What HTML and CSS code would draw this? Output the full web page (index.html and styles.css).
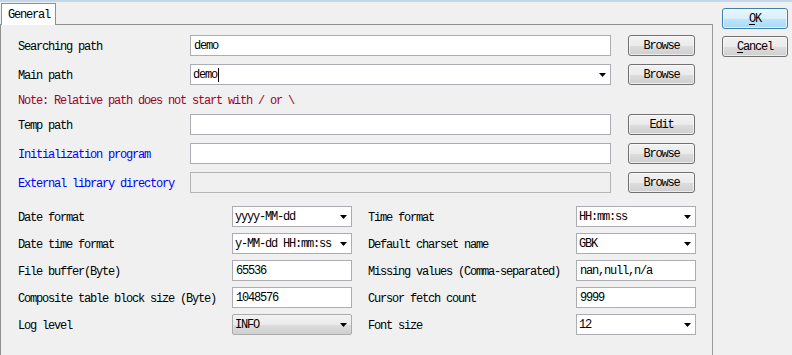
FILE: index.html
```html
<!DOCTYPE html>
<html lang="en">
<head>
  <meta charset="UTF-8">
  <title>Options</title>
  <link rel="stylesheet" href="styles.css">
</head>
<body>
  <div class="window">
    <div class="tabs">
      <div class="tab-strip">
        <div class="tab">General</div>
      </div>
      <div class="panel">
        <!-- path settings -->
        <div class="paths">
          <span class="label">Searching path</span>
          <div class="field"><span class="value">demo</span></div>
          <button class="btn">Browse</button>

          <span class="label">Main path</span>
          <div class="field combo"><span class="value">demo<i class="caret"></i></span><svg class="arrow" width="7" height="4"><path d="M0 0H7L3.5 4Z"/></svg></div>
          <button class="btn">Browse</button>

          <span class="note">Note: Relative path does not start with / or \</span>

          <span class="label">Temp path</span>
          <div class="field"></div>
          <button class="btn">Edit</button>

          <span class="label blue">Initialization program</span>
          <div class="field"></div>
          <button class="btn">Browse</button>

          <span class="label blue">External library directory</span>
          <div class="field disabled"></div>
          <button class="btn">Browse</button>
        </div>

        <!-- general options -->
        <div class="options">
          <span class="label">Date format</span>
          <div class="field combo"><span class="value">yyyy-MM-dd</span><svg class="arrow" width="7" height="4"><path d="M0 0H7L3.5 4Z"/></svg></div>
          <span class="label">Time format</span>
          <div class="field combo"><span class="value">HH:mm:ss</span><svg class="arrow" width="7" height="4"><path d="M0 0H7L3.5 4Z"/></svg></div>

          <span class="label">Date time format</span>
          <div class="field combo"><span class="value">y-MM-dd HH:mm:ss</span><svg class="arrow" width="7" height="4"><path d="M0 0H7L3.5 4Z"/></svg></div>
          <span class="label">Default charset name</span>
          <div class="field combo"><span class="value">GBK</span><svg class="arrow" width="7" height="4"><path d="M0 0H7L3.5 4Z"/></svg></div>

          <span class="label">File buffer(Byte)</span>
          <div class="field"><span class="value">65536</span></div>
          <span class="label">Missing values (Comma-separated)</span>
          <div class="field"><span class="value">nan,null,n/a</span></div>

          <span class="label">Composite table block size (Byte)</span>
          <div class="field"><span class="value">1048576</span></div>
          <span class="label">Cursor fetch count</span>
          <div class="field"><span class="value">9999</span></div>

          <span class="label">Log level</span>
          <div class="field combo readonly"><span class="value">INFO</span><svg class="arrow" width="7" height="4"><path d="M0 0H7L3.5 4Z"/></svg></div>
          <span class="label">Font size</span>
          <div class="field combo"><span class="value">12</span><svg class="arrow" width="7" height="4"><path d="M0 0H7L3.5 4Z"/></svg></div>
        </div>
      </div>
    </div>

    <div class="actions">
      <button class="btn default"><u>O</u>K</button>
      <button class="btn"><u>C</u>ancel</button>
    </div>
  </div>
</body>
</html>
```

FILE: styles.css
```css
/* Dialog look, Windows 7 style */
:root {
  --bg: #f0f0f0;
  --tab-border: #8e8f8f;
  --field-border: #abadb3;
  --btn-border: #707070;
}

html, body {
  margin: 0;
  height: 100%;
  overflow: hidden;
}

body {
  background: var(--bg);
  border-top: 2px solid #c3d7ec;
  box-sizing: border-box;
  font-family: "Liberation Mono", "DejaVu Sans Mono", monospace;
  font-size: 12px;
  letter-spacing: -1.2px;
  color: #000;
}

.window {
  display: flex;
  align-items: flex-start;
}

/* Tabs */
.tabs {
  width: 713px;
}

.tab-strip {
  height: 22px;
  display: flex;
  align-items: flex-end;
}

.tab {
  box-sizing: border-box;
  width: 55px;
  height: 22px;
  margin-left: 1px;
  margin-bottom: -1px;
  padding: 4px 0 0 6px;
  background: #fff;
  border: 1px solid var(--tab-border);
  border-bottom: none;
  position: relative;
  z-index: 1;
}

.panel {
  box-sizing: border-box;
  height: 340px;
  border: 1px solid var(--tab-border);
  border-right-color: #9a9a9a;
  padding: 10px 0 0 17px;
  background: var(--bg);
}

/* Path rows */
.paths {
  display: grid;
  grid-template-columns: 172px 421px 84px;
  grid-template-rows: 21px 21px 13px 21px 21px 21px;
  row-gap: 8px;
  align-items: center;
}

.paths .btn {
  justify-self: end;
  width: 67px;
}

.note {
  grid-column: 1 / -1;
  box-sizing: border-box;
  height: 13px;
  padding-top: 2px;
  line-height: 13px;
  color: #a0001e;
}

/* Option rows */
.options {
  display: grid;
  grid-template-columns: 214px 120px 224px 120px;
  grid-auto-rows: 21px;
  row-gap: 6px;
  margin-top: 13px;
  align-items: center;
}

.options .label:nth-child(4n + 3) {
  padding-left: 16px;
}

.label {
  white-space: nowrap;
  padding-top: 3px;
}

.blue {
  color: #0000ff;
}

/* Fields */
.field {
  box-sizing: border-box;
  height: 21px;
  background: #fff;
  border: 1px solid var(--field-border);
  display: flex;
  align-items: center;
  padding: 1px 3px 0;
  overflow: hidden;
  white-space: nowrap;
}

.field.disabled {
  background: var(--bg);
  border-color: #b5b5b5;
}

.combo {
  justify-content: space-between;
  padding-right: 4px;
  padding-left: 2px;
}

.combo.readonly {
  background: linear-gradient(#f2f2f2, #ebebeb 50%, #dddddd 51%, #cfcfcf);
  border-color: #acacac;
  border-radius: 2px;
}

.value {
  display: flex;
  align-items: center;
}

.caret {
  display: inline-block;
  width: 1px;
  height: 14px;
  background: #000;
  margin-left: 1px;
}

.arrow {
  flex: none;
  margin-bottom: 1px;
}

/* Buttons */
.btn {
  box-sizing: border-box;
  height: 21px;
  padding: 1px 0 0;
  font: inherit;
  letter-spacing: inherit;
  color: #000;
  border: 1px solid var(--btn-border);
  border-radius: 3px;
  background: linear-gradient(#f2f2f2, #ebebeb 50%, #dddddd 51%, #cfcfcf);
  box-shadow: inset 0 0 0 1px rgba(255, 255, 255, 0.6);
}

.btn u {
  text-decoration-thickness: 1px;
  text-underline-offset: 2px;
}

.actions {
  display: flex;
  flex-direction: column;
  gap: 7px;
  margin: 6px 0 0 9px;
}

.actions .btn {
  width: 66px;
}

.btn.default {
  border-color: #3c7fb1;
  background: linear-gradient(#eaf6fd, #d9f0fc 50%, #bee6fd 51%, #a7d9f5);
  box-shadow: inset 0 0 0 1px rgba(255, 255, 255, 0.7);
}
```
